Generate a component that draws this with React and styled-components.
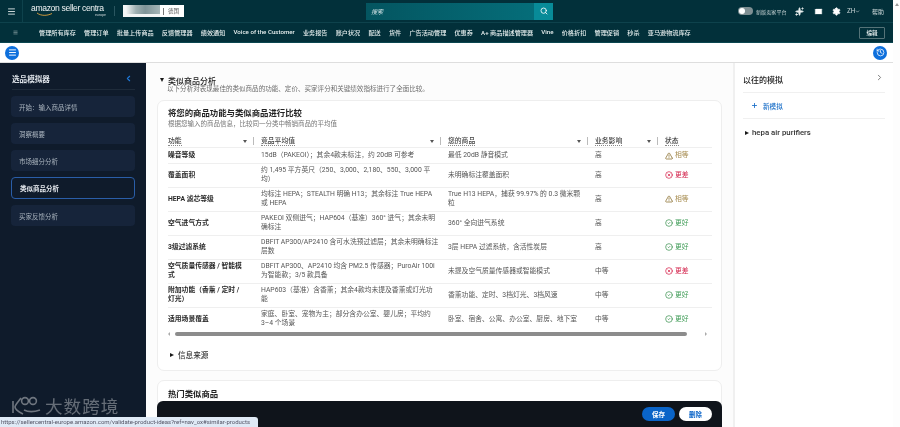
import React from "react";
import styled, { createGlobalStyle } from "styled-components";
import { Menu, Search, Mail, Settings, Sparkles, ChevronLeft, ChevronRight, Plus, TriangleAlert, CircleCheck, CircleX, History, ChevronDown } from "lucide-react";

const FONT = `Roboto, "Noto Sans CJK SC", sans-serif`;

const Global = createGlobalStyle`
  html, body { margin: 0; padding: 0; background: #fff; overflow: hidden; }
  body { font-family: ${FONT}; }
  * { box-sizing: border-box; }
`;

const Screen = styled.div`
  position: relative; width: 900px; height: 427px; overflow: hidden; display: flex; background: #fff; filter: blur(0.45px);
`;
const Page = styled.div`
  width: 893px; height: 427px; display: flex; flex-direction: column;
`;
const PageScroll = styled.div`
  flex: 1; background: #fdfdfd; display: flex; justify-content: center; padding-top: 3px;
  &::before { content: ""; width: 0; height: 0; border-left: 2px solid transparent; border-right: 2px solid transparent; border-bottom: 3px solid #9a9a9a; }
`;
const TopBar = styled.header`
  height: 23px; flex: none; background: #02303a; display: flex; align-items: center; border-bottom: 1px solid #0e424c; color: #fff;
`;
const MenuCell = styled.div`
  width: 23px; height: 100%; display: flex; align-items: center; justify-content: center; border-right: 1px solid #0e424c; color: #d5dfe0;
`;
const Logo = styled.div`
  margin-left: 8px; width: 75px; display: flex; flex-direction: column; line-height: 1; position: relative; color: #f0f4f4;
`;
const LogoText = styled.span`
  font-family: "Liberation Sans", sans-serif; font-size: 8.6px; letter-spacing: -0.35px; white-space: nowrap; line-height: 9px;
`;
const LogoSub = styled.span`
  font-size: 3.6px; align-self: flex-end; margin-top: 0; color: #c5d0d2; line-height: 5px;
`;
const Smile = styled.svg`
  position: absolute; left: 5px; top: 8px;
`;
const ThinDivider = styled.div`
  width: 1px; height: 10px; background: #2a5660; margin-left: 8px; margin-right: 8px;
`;
const Account = styled.div`
  width: 61px; height: 12px; background: #fff; display: flex; align-items: center; color: #555; font-size: 5.5px;
`;
const Redacted = styled.div`
  width: 37px; height: 100%; background: linear-gradient(90deg, #f4f6f6 0 8%, #9fb0b2 35%, #7f9498 60%, #a5b5b7 100%);
  border-bottom: 3px solid #f2f4f4;
`;
const AccountName = styled.span`
  border-left: 1px solid #777; margin-left: 3px; padding-left: 4px; line-height: 7px;
`;
const SearchBox = styled.div`
  margin-left: 182px; width: 187px; height: 17px; display: flex; background: linear-gradient(90deg, #045560, #05707c); align-items: center;
`;
const SearchText = styled.span`
  flex: 1; padding-left: 5px; font-size: 6px; font-style: italic; color: #d5e6e8;
`;
const SearchBtn = styled.div`
  width: 19px; height: 100%; background: #088b98; display: flex; align-items: center; justify-content: center; color: #fff;
`;
const TopRight = styled.div`
  margin-left: 185px; display: flex; align-items: center; color: #e8eeee;
`;
const Toggle = styled.div`
  width: 15px; height: 8px; border-radius: 4px; background: #7e8f93; display: flex; align-items: center; padding-left: 1px;
  &::before { content: ""; width: 6px; height: 6px; border-radius: 50%; background: #fff; }
`;
const ToggleLabel = styled.span`
  font-size: 5.1px; margin-left: 3px; width: 33px; white-space: nowrap; color: #c9d5d6;
`;
const IconSlot = styled.span`
  width: ${p => p.$w}px; display: flex; justify-content: center; align-items: center;
`;
const Lang = styled.span`
  font-size: 6.4px; display: flex; align-items: center; margin-left: 2px; width: 25px; color: #cfdadb;
`;
const Help = styled.span`
  font-size: 6px; color: #cfdadb;
`;

const NavBar = styled.nav`
  height: 20px; flex: none; background: #02303a; display: flex; align-items: center; color: #e6eeee; border-bottom: 1px solid #0b4650;
`;
const NavMenu = styled.div`
  width: 39px; flex: none; padding-left: 13px; display: flex; color: #8fa5a8;
`;
const NavItems = styled.div`
  display: flex; gap: 8.2px; flex: 1;
`;
const NavItem = styled.span`
  font-size: 6.15px; white-space: nowrap; font-weight: 500;
`;
const EditBtn = styled.button`
  width: 26px; height: 12px; margin-right: 8px; background: transparent; border: 1px solid #557378; border-radius: 1px; color: #e6eeee; font: 500 5.6px ${FONT}; padding: 0;
`;
const ActionStrip = styled.div`
  height: 19px; flex: none; display: flex; align-items: center; justify-content: space-between; padding: 0 6px 0 5px; background: #fff;
`;
const RoundBtn = styled.div`
  width: 14px; height: 14px; border-radius: 50%; background: #0d6fdc; color: #fff; display: flex; align-items: center; justify-content: center;
`;

const Body = styled.div`
  flex: 1; min-height: 0; display: flex; border-top: 1px solid #dedede;
`;
const Sidebar = styled.aside`
  width: 146px; flex: none; background: #0f1b2b; padding: 0 11px;
`;
const SideHead = styled.div`
  height: 27px; margin-left: 1px; padding: 4px 2px 0 0; display: flex; align-items: center; justify-content: space-between; border-bottom: 1px solid #1e2b3a;
  font-size: 7.6px; font-weight: 700; color: #dfe4ea;
`;
const SideList = styled.div`
  margin-top: 6px; display: flex; flex-direction: column; gap: 6px;
`;
const SideItem = styled.div`
  height: ${p => (p.$active ? 22 : 21)}px; border-radius: 4px; padding-left: 8px; display: flex; align-items: center; font-size: 6.5px;
  background: ${p => (p.$active ? "#0f1b2b" : "#16243a")};
  border: ${p => (p.$active ? "1px solid #2a5ea8" : "none")};
  color: ${p => (p.$active ? "#e5e9ee" : "#aab4be")};
  font-weight: ${p => (p.$active ? 700 : 400)};
`;

const Main = styled.main`
  position: relative; width: 587px; flex: none; background: #fcfcfc; padding: 12px 11px 0; overflow: hidden;
`;
const SectionHead = styled.div`
  display: flex; align-items: center; margin-left: 3px; height: 10px; font-size: 8px; font-weight: 500; color: #222;
`;
const Tri = styled.span`
  display: inline-block; width: 0; height: 0; margin-right: ${p => p.$mr || 4}px;
  ${p => p.$down
    ? "border-left:2.5px solid transparent;border-right:2.5px solid transparent;border-top:4px solid #1a1a1a;"
    : "border-top:2.5px solid transparent;border-bottom:2.5px solid transparent;border-left:4px solid #1a1a1a;"}
`;
const SectionDesc = styled.div`
  margin-left: 10px; font-size: 6.55px; line-height: 9px; color: #6d6d6d; white-space: nowrap;
`;
const Card = styled.section`
  margin-top: ${p => p.$mt}px; background: #fff; border: 1px solid #eeeeee; border-radius: 7px; padding: ${p => p.$pad};
`;
const CardTitle = styled.h3`
  margin: 0; font-size: 8.4px; line-height: 12px; font-weight: 700; color: #222;
`;
const CardSub = styled.div`
  font-size: 6.5px; line-height: 11px; color: #777;
`;
const Table = styled.div`
  margin-top: 5px; width: 544px; font-size: 6.8px; color: #555;
`;
const Row = styled.div`
  display: grid; grid-template-columns: 93px 187px 147px 70px 47px; align-items: center; min-height: 16px; padding: 1.9px 0; border-top: 1px solid #efefef; line-height: 9.6px;
`;
const HeadRow = styled.div`
  display: grid; grid-template-columns: 93px 187px 147px 70px 47px; height: 12px; align-items: center;
`;
const HeadCell = styled.div`
  position: relative; height: 100%; display: flex; align-items: center; justify-content: space-between; padding-right: ${p => (p.$last ? 0 : 8)}px;
  &::after { content: ""; display: ${p => (p.$last ? "none" : "block")}; position: absolute; right: 7px; top: 2px; width: 1px; height: 8px; background: #bbb; }
`;
const HeadLabel = styled.span`
  color: #444; border-bottom: 1px dotted #888; line-height: 8px; font-weight: 500;
`;
const Caret = styled.span`
  width: 0; height: 0; margin-right: 6px; border-left: 2.5px solid transparent; border-right: 2.5px solid transparent; border-top: 3.5px solid #555;
`;
const Feature = styled.div`
  font-weight: 700; color: #2a2a2a; white-space: pre-line;
`;
const Cell = styled.div`
  white-space: pre-line;
`;
const COLORS = { warn: "#a58a4c", bad: "#d3224a", good: "#3f9c56" };
const ICON_COLORS = { warn: "#7a5a10", bad: "#d3103c", good: "#2c8a42" };
const StatusCell = styled.div`
  display: flex; align-items: center; gap: 2px; color: ${p => COLORS[p.$k]};
  svg { color: ${p => ICON_COLORS[p.$k]}; }
`;
const HScroll = styled.div`
  margin-top: 1.5px; width: 544px; height: 4px; display: flex; align-items: center;
`;
const Arrow = styled.span`
  width: 0; height: 0; border-top: 2px solid transparent; border-bottom: 2px solid transparent;
  ${p => (p.$left ? "border-right: 2.5px solid #aaa;" : "border-left: 2.5px solid #aaa;")}
`;
const Thumb = styled.div`
  width: 512px; height: 4px; border-radius: 2px; background: #8c8c8c; margin-left: 5px; margin-right: 18px;
`;
const SourceRow = styled.div`
  margin-top: 13.5px; margin-left: 2px; height: 10px; display: flex; align-items: center; font-size: 7.6px; font-weight: 500; color: #333;
`;
const SaveBar = styled.div`
  position: absolute; left: 11px; bottom: 0; width: 565px; height: 26px; background: #0f141b; border-radius: 6px 6px 0 0; display: flex; align-items: flex-start; justify-content: flex-end; gap: 4px; padding: 6px 10px 0 0;
`;
const SaveBtn = styled.button`
  width: 33px; height: 14px; border-radius: 7px; border: none; padding: 0; font: 700 6.5px ${FONT};
  background: ${p => (p.$primary ? "#0a64c8" : "#fff")}; color: ${p => (p.$primary ? "#fff" : "#0a64c8")};
`;

const RightPanel = styled.aside`
  flex: 1; background: #fff; border-left: 2px solid #f0f0f0; padding: 0 8px 0 8px;
`;
const RightHead = styled.div`
  height: 30px; padding: 3px 1px 0 0; display: flex; align-items: center; justify-content: space-between; font-size: 8px; font-weight: 500; color: #222; border-bottom: 1px solid #f0f0f0;
  svg { margin-top: -4px; }
`;
const NewSim = styled.div`
  height: 26px; padding-left: 8px; display: flex; align-items: center; gap: 5px; font-size: 6.6px; font-weight: 500; color: #1a6fc8; border-bottom: 1px solid #f0f0f0;
`;
const Hist = styled.div`
  margin: 9px 0 0 2px; height: 9px; display: flex; align-items: center; font-size: 7.8px; font-weight: 500; color: #333;
`;

const StatusTip = styled.div`
  position: absolute; left: 0; bottom: 0; width: 258px; height: 10px; background: #dfeaf6; border-radius: 0 3px 0 0; font-size: 6px; line-height: 10px; padding-left: 1px; color: #556; white-space: nowrap; overflow: hidden;
`;
const Watermark = styled.div`
  position: absolute; left: 10px; bottom: 10px; display: flex; align-items: center; gap: 3px; color: rgba(255,255,255,0.36); font-size: 17.6px; letter-spacing: 1px; line-height: 20px; font-family: "Noto Sans CJK SC", sans-serif; pointer-events: none;
`;

const navItems = ["管理所有库存", "管理订单", "批量上传商品", "反馈管理器", "绩效通知", "Voice of the Customer", "业务报告", "账户状况", "配送", "货件", "广告活动管理", "优惠券", "A+ 商品描述管理器", "Vine", "价格折扣", "管理促销", "秒杀", "亚马逊物流库存"];
const sideItems = ["开始：输入商品详情", "洞察概要", "市场细分分析", "类似商品分析", "买家反馈分析"];
const STATUS = { warn: ["相等", TriangleAlert], bad: ["更差", CircleX], good: ["更好", CircleCheck] };
const rows = [
  ["噪音等级", "15dB（PAKEOI）；其余4款未标注，约 20dB 可参考", "最低 20dB 静音模式", "高", "warn"],
  ["覆盖面积", "约 1,495 平方英尺（250、3,000、2,180、550、3,000 平\n均）", "未明确标注覆盖面积", "高", "bad"],
  ["HEPA 滤芯等级", "均标注 HEPA；STEALTH 明确 H13；其余标注 True HEPA\n或 HEPA", "True H13 HEPA，捕获 99.97% 的 0.3 微米颗\n粒", "高", "warn"],
  ["空气进气方式", "PAKEOI 双侧进气；HAP604（基准）360° 进气；其余未明\n确标注", "360° 全向进气系统", "高", "good"],
  ["3级过滤系统", "DBFIT AP300/AP2410 含可水洗预过滤层；其余未明确标注\n层数", "3层 HEPA 过滤系统，含活性炭层", "高", "good"],
  ["空气质量传感器 / 智能模\n式", "DBFIT AP300、AP2410 均含 PM2.5 传感器；PuroAir 100i\n为智能款；3/5 款具备", "未提及空气质量传感器或智能模式", "中等", "bad"],
  ["附加功能（香薰 / 定时 /\n灯光）", "HAP603（基准）含香薰；其余4款均未提及香薰或灯光功\n能", "香薰功能、定时、3档灯光、3档风速", "中等", "good"],
  ["适用场景覆盖", "家庭、卧室、宠物为主；部分含办公室、婴儿房；平均约\n3–4 个场景", "卧室、宿舍、公寓、办公室、厨房、地下室", "中等", "good"],
];
const heads = ["功能", "竞品平均值", "您的商品", "业务影响", "状态"];

export default function App() {
  return (
    <>
      <Global />
      <Screen>
        <Page>
          <TopBar>
            <MenuCell><Menu size={9} strokeWidth={2.5} /></MenuCell>
            <Logo>
              <LogoText>amazon seller centra</LogoText>
              <Smile width="18" height="5" viewBox="0 0 18 5"><path d="M1 1c4 3 10 3 15 .5" fill="none" stroke="#e2a33c" strokeWidth="0.9" /></Smile>
              <LogoSub>europe</LogoSub>
            </Logo>
            <ThinDivider />
            <Account><Redacted /><AccountName>德国</AccountName></Account>
            <SearchBox>
              <SearchText>搜索</SearchText>
              <SearchBtn><Search size={8} strokeWidth={2.5} /></SearchBtn>
            </SearchBox>
            <TopRight>
              <Toggle />
              <ToggleLabel>新版卖家平台</ToggleLabel>
              <IconSlot $w={20}><Sparkles size={9} fill="currentColor" /></IconSlot>
              <IconSlot $w={18}><Mail size={9} fill="#fff" stroke="#02303a" /></IconSlot>
              <IconSlot $w={18}><Settings size={9} fill="#fff" stroke="#fff" /></IconSlot>
              <Lang>ZH<ChevronDown size={5} strokeWidth={3} /></Lang>
              <Help>帮助</Help>
            </TopRight>
          </TopBar>
          <NavBar>
            <NavMenu><Menu size={5} strokeWidth={3} /></NavMenu>
            <NavItems>{navItems.map(n => <NavItem key={n}>{n}</NavItem>)}</NavItems>
            <EditBtn>编辑</EditBtn>
          </NavBar>
          <ActionStrip>
            <RoundBtn><Menu size={9} strokeWidth={2.5} /></RoundBtn>
            <RoundBtn><History size={9} strokeWidth={2} /></RoundBtn>
          </ActionStrip>
          <Body>
            <Sidebar>
              <SideHead>选品模拟器<ChevronLeft size={9} color="#1e78d8" strokeWidth={3} /></SideHead>
              <SideList>
                {sideItems.map((s, i) => <SideItem key={s} $active={i === 3}>{s}</SideItem>)}
              </SideList>
            </Sidebar>
            <Main>
              <SectionHead><Tri $down />类似商品分析</SectionHead>
              <SectionDesc>以下分析对表现最佳的类似商品的功能、定价、买家评分和关键绩效指标进行了全面比较。</SectionDesc>
              <Card $mt={6} $pad="6px 10px 10px">
                <CardTitle>将您的商品功能与类似商品进行比较</CardTitle>
                <CardSub>根据您输入的商品信息，比较同一分类中畅销商品的平均值</CardSub>
                <Table>
                  <HeadRow>
                    {heads.map((h, i) => (
                      <HeadCell key={h} $last={i === 4}>
                        <HeadLabel>{h}</HeadLabel>
                        {i < 4 && <Caret />}
                      </HeadCell>
                    ))}
                  </HeadRow>
                  {rows.map(r => {
                    const [label, Icon] = STATUS[r[4]];
                    return (
                      <Row key={r[0]}>
                        <Feature>{r[0]}</Feature>
                        <Cell>{r[1]}</Cell>
                        <Cell>{r[2]}</Cell>
                        <Cell>{r[3]}</Cell>
                        <StatusCell $k={r[4]}><Icon size={8} strokeWidth={2} />{label}</StatusCell>
                      </Row>
                    );
                  })}
                </Table>
                <HScroll><Arrow $left /><Thumb /><Arrow /></HScroll>
                <SourceRow><Tri $mr={4} />信息来源</SourceRow>
              </Card>
              <Card $mt={9} $pad="7px 10px 30px">
                <CardTitle>热门类似商品</CardTitle>
              </Card>
              <SaveBar>
                <SaveBtn $primary>保存</SaveBtn>
                <SaveBtn>删除</SaveBtn>
              </SaveBar>
            </Main>
            <RightPanel>
              <RightHead>以往的模拟<ChevronRight size={9} color="#555" /></RightHead>
              <NewSim><Plus size={7} strokeWidth={3} />新模拟</NewSim>
              <Hist><Tri $mr={3} />hepa air purifiers</Hist>
            </RightPanel>
          </Body>
        </Page>
        <PageScroll />
        <Watermark>
          <svg width="32" height="22" viewBox="0 0 32 22" fill="none" stroke="rgba(255,255,255,0.4)" strokeWidth="1.6">
            <path d="M3 6v12M11 3c-3 4-6 7-6 9s4 5 8 7" />
            <circle cx="15" cy="6" r="3.4" />
            <circle cx="23" cy="6" r="3.4" />
            <path d="M14 15c4 2 10 2 16 0" />
          </svg>
          <span>大数跨境</span>
        </Watermark>
        <StatusTip>https://sellercentral-europe.amazon.com/validate-product-ideas?ref=nav_ox#similar-products</StatusTip>
      </Screen>
    </>
  );
}
